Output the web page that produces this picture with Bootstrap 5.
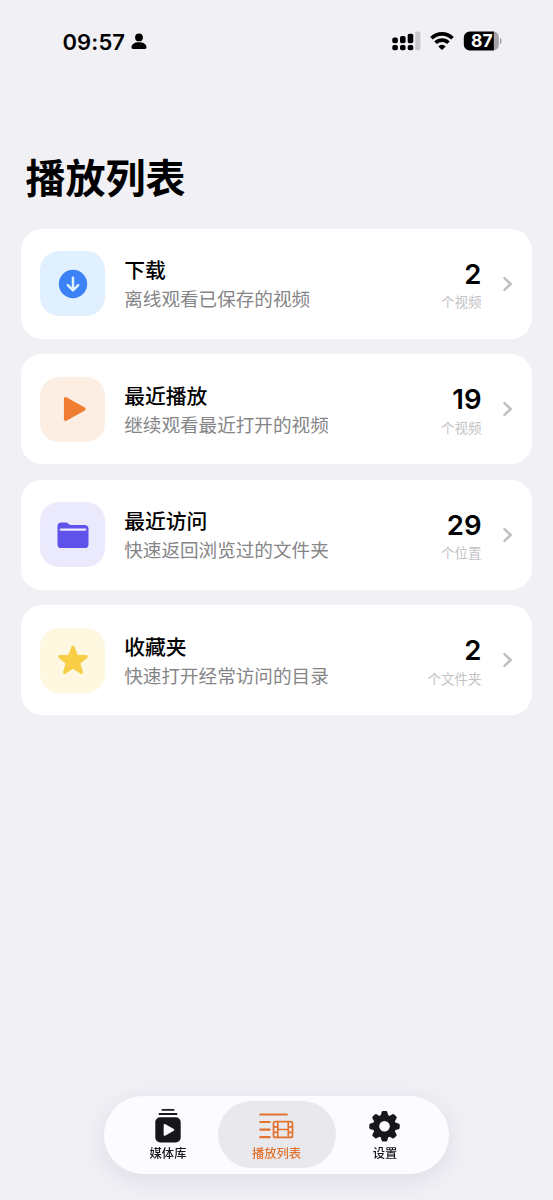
<!DOCTYPE html>
<html lang="zh-CN">
<head>
<meta charset="utf-8">
<meta name="viewport" content="width=device-width, initial-scale=1">
<title>播放列表</title>
<link rel="stylesheet" href="https://cdn.jsdelivr.net/npm/bootstrap@5.3.0/dist/css/bootstrap.min.css">
<style>
  html, body { height: 1200px; overflow: hidden; }
  body { background: #f1f0f5; color: #000; font-family: Inter, "Noto Sans CJK SC", sans-serif; }
  svg { display: block; flex: none; }
  .status-bar { height: 82px; padding: 0 51.5px 0 62.5px; }
  .clock { font-size: 22px; font-weight: 600; line-height: 1; padding-top: 1px; letter-spacing: .1px; }
  .page-title { margin: 67.5px 0 0 25.5px; font-size: 40px; line-height: 58px; font-weight: 700; }
  .list-area { margin-top: 21.5px; padding: 0 21px; gap: 15.8px; }
  .entry { height: 109.7px; border-radius: 21px; background: #fff; padding: 0 19.5px 0 19.2px; color: #000; }
  .tile { width: 65px; height: 65px; border-radius: 19px; flex: none; }
  .tile-blue { background: #e1f0fe; }
  .tile-orange { background: #fceee2; }
  .tile-purple { background: #ebe9fc; }
  .tile-yellow { background: #fef8e1; }
  .entry-text { margin-left: 19px; padding-top: 3.6px; }
  .entry-name { font-size: 20.8px; line-height: 28px; font-weight: 500; }
  .entry-note { font-size: 18.6px; line-height: 28.600px; color: #858588; font-weight: 400; white-space: nowrap; }
  .count-col { padding-top: 3px; }
  .count { font-size: 27.5px; line-height: 30px; font-weight: 600; }
  .unit { font-size: 13.5px; line-height: 20px; color: #c3c3c6; margin-top: 3.5px; font-weight: 400; }
  .chev { margin-left: 20px; }
  .tab-bar { width: 345px; height: 78px; border-radius: 39px; background: #fcfbff; padding: 5px; bottom: 26.5px; left: 104px; box-shadow: 0 6px 26px rgba(60,50,100,.10); }
  .tab { width: 118px; height: 67px; border-radius: 33.5px; color: #17171b; font-size: 12.3px; font-weight: 500; line-height: 18px; padding-top: 6.500px; }
  .tab-side-start { margin-right: -9.5px; }
  .tab-side-end { margin-left: -9.5px; }
  .tab-label { margin-top: 2px; }
  .tab.active { background: #e9e8ed; color: #e2732f; }
</style>
</head>
<body class="d-flex flex-column">
  <header class="status-bar d-flex align-items-center justify-content-between flex-shrink-0">
    <div class="d-flex align-items-center">
      <span class="clock">09:57</span>
      <svg width="16" height="17" viewBox="0 0 16 17" style="margin-left:5.500px" fill="#000"><circle cx="8" cy="4.400" r="3.900"/><path d="M.5 14.300C.5 11.400 3.300 9.300 8 9.300s7.500 2.100 7.500 5c0 1.100-.6 1.700-1.600 1.700H2.100C1.100 16 .5 15.400.5 14.300z"/></svg>
    </div>
    <div class="d-flex align-items-center">
      <svg width="29" height="20" viewBox="0 0 29 20">
        <g fill="#000"><rect x=".3" y="6.600" width="5.600" height="5.600" rx="1.800"/><rect x="8" y="5" width="5.600" height="7.200" rx="1.800"/><rect x="15.700" y="2.800" width="5.600" height="9.400" rx="1.800"/><rect x=".3" y="14" width="5.600" height="5.200" rx="1.800"/><rect x="8" y="14" width="5.600" height="5.200" rx="1.800"/><rect x="15.700" y="14" width="5.600" height="5.200" rx="1.800"/></g>
        <rect x="23.200" y=".6" width="5.200" height="18.600" rx="1.900" fill="#c9c9ce"/>
      </svg>
      <svg width="24" height="18" viewBox="0 0 24 18" style="margin-left:8.500px"><g fill="none" stroke="#000" stroke-width="3.700"><path d="M1.500 6.300a14.900 14.900 0 0 1 21 0"/><path d="M5.600 10.700a9 9 0 0 1 12.800 0"/></g><path d="M12 18l-3.700-3.600a5.200 5.200 0 0 1 7.400 0z"/></svg>
      <svg width="39" height="20" viewBox="0 0 39 20" style="margin-left:9px">
        <path d="M31 .5v19H6.800a6 6 0 0 1-6-6v-7a6 6 0 0 1 6-6z"/>
        <path d="M30.800.5a5.400 5.400 0 0 1 5 6v7a5.400 5.400 0 0 1-5 6z" fill="#a4a4a8"/>
        <path d="M37 6.800c2.200 1 2.200 5.400 0 6.400z" fill="#a4a4a8"/>
        <text x="18.800" y="16.200" text-anchor="middle" font-family="Inter, sans-serif" font-size="17.500" font-weight="700" fill="#fff">87</text>
      </svg>
    </div>
  </header>

  <h1 class="page-title mb-0">播放列表</h1>

  <main class="list-area d-flex flex-column">
    <a href="#" class="entry d-flex align-items-center text-decoration-none">
      <span class="tile tile-blue d-flex align-items-center justify-content-center">
        <svg width="30" height="30" viewBox="0 0 30 30"><circle cx="15" cy="15" r="14.200" fill="#3a82f5"/><path d="M15 8.700v12M9.800 16.100l5.200 5.200 5.200-5.200" fill="none" stroke="#e1f0fe" stroke-width="2.500" stroke-linecap="round" stroke-linejoin="round"/></svg>
      </span>
      <span class="entry-text d-flex flex-column"><span class="entry-name">下载</span><span class="entry-note">离线观看已保存的视频</span></span>
      <span class="count-col ms-auto d-flex flex-column text-end"><span class="count">2</span><span class="unit">个视频</span></span>
      <svg class="chev" width="11" height="16" viewBox="0 0 11 16"><path d="M2.500 2.200L8.700 8l-6.200 5.800" fill="none" stroke="#bfbfc2" stroke-width="2.500" stroke-linecap="round" stroke-linejoin="round"/></svg>
    </a>
    <a href="#" class="entry d-flex align-items-center text-decoration-none">
      <span class="tile tile-orange d-flex align-items-center justify-content-center">
        <svg width="30" height="30" viewBox="0 0 30 30"><path d="M7.600 4.700v20.600L26 15z" fill="#ef7d32" stroke="#ef7d32" stroke-width="3.400" stroke-linejoin="round"/></svg>
      </span>
      <span class="entry-text d-flex flex-column"><span class="entry-name">最近播放</span><span class="entry-note">继续观看最近打开的视频</span></span>
      <span class="count-col ms-auto d-flex flex-column text-end"><span class="count">19</span><span class="unit">个视频</span></span>
      <svg class="chev" width="11" height="16" viewBox="0 0 11 16"><path d="M2.500 2.200L8.700 8l-6.200 5.800" fill="none" stroke="#bfbfc2" stroke-width="2.500" stroke-linecap="round" stroke-linejoin="round"/></svg>
    </a>
    <a href="#" class="entry d-flex align-items-center text-decoration-none">
      <span class="tile tile-purple d-flex align-items-center justify-content-center">
        <svg width="32" height="28" viewBox="0 0 32 28"><path d="M.5 5.300C.5 2.800 1.900 1.400 4.300 1.400h4c1.300 0 2 .3 2.900 1l1 .8c.7.600 1.200.8 2.200.8h13.200c2.500 0 3.900 1.400 3.900 3.900v15.300c0 2.500-1.400 3.900-3.900 3.900H4.400C1.900 27.100.5 25.700.5 23.200z" fill="#5f52ea"/><path d="M3.700 8.600h24.600" stroke="#ebe9fc" stroke-width="2.200" stroke-linecap="round"/></svg>
      </span>
      <span class="entry-text d-flex flex-column"><span class="entry-name">最近访问</span><span class="entry-note">快速返回浏览过的文件夹</span></span>
      <span class="count-col ms-auto d-flex flex-column text-end"><span class="count">29</span><span class="unit">个位置</span></span>
      <svg class="chev" width="11" height="16" viewBox="0 0 11 16"><path d="M2.500 2.200L8.700 8l-6.200 5.800" fill="none" stroke="#bfbfc2" stroke-width="2.500" stroke-linecap="round" stroke-linejoin="round"/></svg>
    </a>
    <a href="#" class="entry d-flex align-items-center text-decoration-none">
      <span class="tile tile-yellow d-flex align-items-center justify-content-center">
        <svg width="32" height="32" viewBox="0 0 32 32"><path d="M16 3.200l3.500 9.200 9.700.3-7.600 6.200 2.800 9.600-8.400-5.500-8.400 5.500 2.800-9.600-7.600-6.200 9.700-.3z" fill="#f7ce46" stroke="#f7ce46" stroke-width="3.200" stroke-linejoin="round"/></svg>
      </span>
      <span class="entry-text d-flex flex-column"><span class="entry-name">收藏夹</span><span class="entry-note">快速打开经常访问的目录</span></span>
      <span class="count-col ms-auto d-flex flex-column text-end"><span class="count">2</span><span class="unit">个文件夹</span></span>
      <svg class="chev" width="11" height="16" viewBox="0 0 11 16"><path d="M2.500 2.200L8.700 8l-6.200 5.800" fill="none" stroke="#bfbfc2" stroke-width="2.500" stroke-linecap="round" stroke-linejoin="round"/></svg>
    </a>
  </main>

  <nav class="tab-bar position-fixed d-flex align-items-center justify-content-center">
    <div class="tab tab-side-start d-flex flex-column align-items-center">
      <svg width="34" height="35" viewBox="0 0 34 35"><g stroke="#17171b" stroke-width="1.900" stroke-linecap="round"><path d="M11.500 1.900h11M8.500 6h17"/></g><rect x="4.300" y="9.200" width="25.400" height="25.200" rx="5" fill="#17171b"/><path d="M13.600 16.900v10l8.700-5z" fill="#fcfbff" stroke="#fcfbff" stroke-width="1.900" stroke-linejoin="round"/></svg>
      <span class="tab-label">媒体库</span>
    </div>
    <div class="tab active d-flex flex-column align-items-center">
      <svg width="36" height="35" viewBox=".7 0 36 35" fill="none" stroke="#e2732f" stroke-linecap="round"><path stroke-width="2.200" d="M2 6.500h26.500M2 14h9.300M2 21.600h9.300M2 29.200h9.300"/><g stroke-width="1.700"><rect x="15.200" y="13.700" width="19" height="15.700" rx="2"/><path d="M19.500 14v15M30 14v15M19.500 21.500H30M15.500 18.800h4M15.500 24.300h4M30 18.800h4M30 24.300h4"/></g></svg>
      <span class="tab-label">播放列表</span>
    </div>
    <div class="tab tab-side-end d-flex flex-column align-items-center">
      <svg width="34" height="35" viewBox="-16.500 -18.300 34 35"><g fill="#17171b"><g id="teeth"><path id="tooth" d="M-4.300-9L-2.900-14Q-2.600-15.200-1.500-15.200H1.500Q2.600-15.200 2.900-14L4.300-9V9L2.900 14Q2.600 15.200 1.500 15.200H-1.500Q-2.600 15.200-2.900 14L-4.300 9z"/><use href="#tooth" transform="rotate(90)"/></g><use href="#teeth" transform="rotate(45)"/><circle r="11.500"/></g><circle r="5.300" fill="#fcfbff"/></svg>
      <span class="tab-label">设置</span>
    </div>
  </nav>
<script src="https://cdn.jsdelivr.net/npm/bootstrap@5.3.0/dist/js/bootstrap.bundle.min.js"></script>
</body>
</html>
